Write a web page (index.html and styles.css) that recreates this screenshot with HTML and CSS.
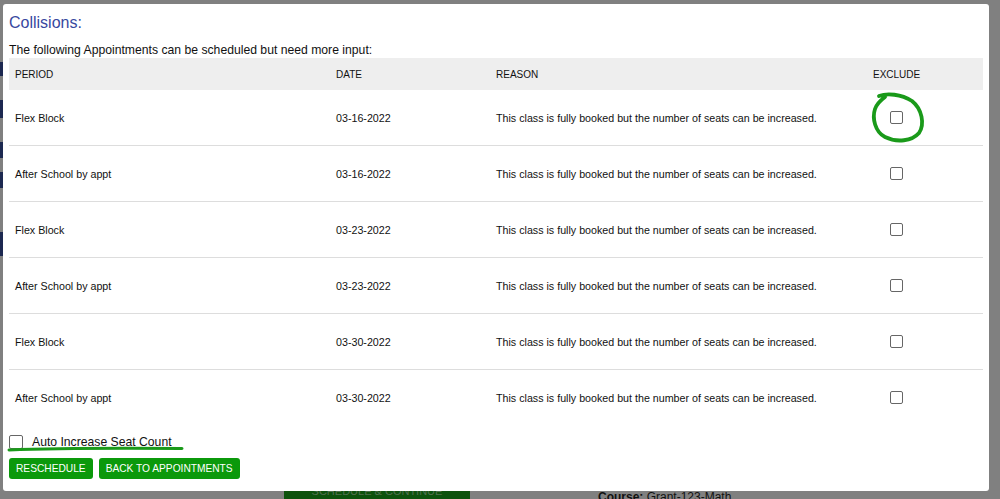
FILE: index.html
```html
<!DOCTYPE html>
<html>
<head>
<meta charset="utf-8">
<link rel="stylesheet" href="styles.css">
</head>
<body>
<div class="backdrop">
  <div class="bg-marks">
    <span class="mark m1"></span><span class="mark m2"></span><span class="mark m3"></span><span class="mark m4"></span><span class="mark m5"></span>
  </div>
  <div class="bg-bottom">
    <div class="bg-btn">SCHEDULE &amp; CONTINUE</div>
    <div class="bg-course"><b>Course:</b> Grant-123-Math</div>
  </div>
  <div class="modal">
    <h2 class="title">Collisions:</h2>
    <p class="intro">The following Appointments can be scheduled but need more input:</p>
    <table class="grid">
      <colgroup><col class="w-period"><col class="w-date"><col class="w-reason"><col class="w-ex"></colgroup>
      <thead>
        <tr><th>PERIOD</th><th>DATE</th><th>REASON</th><th>EXCLUDE</th></tr>
      </thead>
      <tbody>
        <tr><td>Flex Block</td><td>03-16-2022</td><td>This class is fully booked but the number of seats can be increased.</td><td class="c-ex"><span class="box"></span></td></tr>
        <tr><td>After School by appt</td><td>03-16-2022</td><td>This class is fully booked but the number of seats can be increased.</td><td class="c-ex"><span class="box"></span></td></tr>
        <tr><td>Flex Block</td><td>03-23-2022</td><td>This class is fully booked but the number of seats can be increased.</td><td class="c-ex"><span class="box"></span></td></tr>
        <tr><td>After School by appt</td><td>03-23-2022</td><td>This class is fully booked but the number of seats can be increased.</td><td class="c-ex"><span class="box"></span></td></tr>
        <tr><td>Flex Block</td><td>03-30-2022</td><td>This class is fully booked but the number of seats can be increased.</td><td class="c-ex"><span class="box"></span></td></tr>
        <tr class="last"><td>After School by appt</td><td>03-30-2022</td><td>This class is fully booked but the number of seats can be increased.</td><td class="c-ex"><span class="box"></span></td></tr>
      </tbody>
    </table>
    <label class="auto"><span class="box big"></span><span class="auto-text">Auto Increase Seat Count</span>
      <svg class="underline" width="180" height="8" viewBox="0 0 180 8"><path d="M3 5 C40 3.5 100 3 176 3.5" stroke="#1a9a1a" stroke-width="3" fill="none" stroke-linecap="round"/></svg>
    </label>
    <div class="actions">
      <button class="btn">RESCHEDULE</button>
      <button class="btn">BACK TO APPOINTMENTS</button>
    </div>
    <svg class="circle" width="58" height="56" viewBox="0 0 58 56"><path d="M9 5 C17 2 31 3 42 10 C52 18 55 33 49 42 C42 50 27 52 15 46 C5 41 2 27 5 18 C7 12 11 9 15 6" stroke="#1a9a1a" stroke-width="3.8" fill="none" stroke-linecap="round"/></svg>
  </div>
</div>
</body>
</html>
```
FILE: styles.css
```css
html, body {
  margin: 0;
  padding: 0;
}
body {
  background: #808080;
  font-family: "Liberation Sans", Arial, sans-serif;
  color: #1a1a1a;
  width: 1000px;
  height: 499px;
  overflow: hidden;
}
.backdrop {
  position: relative;
  width: 1000px;
  height: 499px;
  padding-top: 4px;
  box-sizing: border-box;
}
.bg-marks {
  position: absolute;
  left: 0;
  top: 0;
}
.mark {
  position: absolute;
  left: 0;
  width: 3px;
  background: #1c2850;
}
.m1 { top: 62px; height: 14px; }
.m2 { top: 100px; height: 18px; }
.m3 { top: 142px; height: 16px; }
.m4 { top: 172px; height: 16px; }
.m5 { top: 232px; height: 24px; }
.bg-bottom {
  position: absolute;
  left: 0;
  top: 491px;
  width: 1000px;
  height: 8px;
  overflow: hidden;
}
.bg-btn {
  position: absolute;
  left: 284px;
  top: 0;
  width: 186px;
  height: 20px;
  background: #0d520d;
  color: #4f704f;
  font-size: 11px;
  text-align: center;
  line-height: 0;
}
.bg-course {
  position: absolute;
  left: 598px;
  top: -1px;
  font-size: 12px;
  color: #111;
  line-height: 14px;
}
.modal {
  position: relative;
  margin-left: 3px;
  width: 986px;
  height: 487px;
  background: #fff;
  border-radius: 3px;
  box-sizing: border-box;
  padding: 9px 6px 0 6px;
}
.title {
  margin: 0;
  font-weight: normal;
  font-size: 16px;
  line-height: 20px;
  color: #3848a0;
}
.intro {
  margin: 10px 0 0 0;
  font-size: 12.2px;
  line-height: 15px;
  color: #111;
}
.grid {
  width: 974px;
  table-layout: fixed;
  border-collapse: collapse;
  font-size: 10.7px;
  color: #111;
}
.w-period { width: 321px; }
.w-date { width: 160px; }
.w-reason { width: 377px; }
.w-ex { width: 116px; }
.grid th {
  background: #eeeeee;
  font-weight: normal;
  text-align: left;
  height: 32px;
  padding: 0 0 0 6px;
  font-size: 10px;
}
.grid td {
  height: 55px;
  padding: 0 0 0 6px;
  border-bottom: 1px solid #dddddd;
  white-space: nowrap;
}
.grid tr.last td {
  border-bottom: none;
}
.grid td.c-ex {
  padding-left: 23px;
}
.box {
  display: inline-block;
  width: 11px;
  height: 11px;
  border: 1px solid #666;
  border-radius: 2px;
  vertical-align: middle;
  background: #fff;
}
.auto {
  position: relative;
  display: flex;
  align-items: center;
  margin-top: 9px;
  height: 15px;
  font-size: 12.2px;
  color: #111;
}
.box.big {
  width: 12px;
  height: 12px;
}
.auto-text {
  margin-left: 9px;
}
.underline {
  position: absolute;
  left: -3px;
  top: 11px;
}
.actions {
  display: flex;
  gap: 6px;
  margin-top: 9px;
}
.btn {
  background: #0b990b;
  color: #fff;
  border: none;
  border-radius: 3px;
  height: 21px;
  padding: 0 7px;
  font-family: "Liberation Sans", Arial, sans-serif;
  font-size: 10.2px;
  cursor: pointer;
}
.circle {
  position: absolute;
  left: 867px;
  top: 87px;
}
```
